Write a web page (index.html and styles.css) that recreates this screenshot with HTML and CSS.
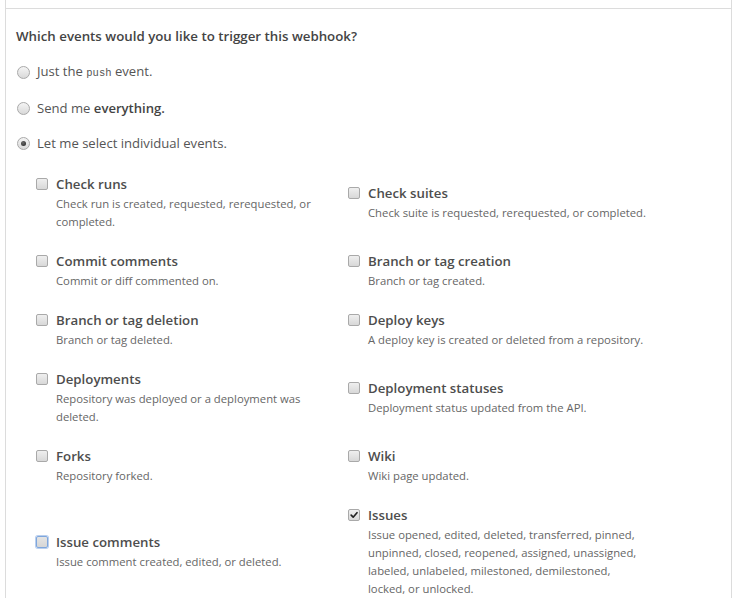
FILE: index.html
```html
<!DOCTYPE html>
<html lang="en">
<head>
<meta charset="utf-8">
<title>Webhook events</title>
<link rel="stylesheet" href="styles.css">
</head>
<body>
<div class="panel">
  <div class="panel-top"></div>
  <div class="panel-body">
    <h5 class="question">Which events would you like to trigger this webhook?</h5>
    <div class="radios">
      <label class="radio-row"><span class="radio"></span><span>Just the <code class="mono">push</code> event.</span></label>
      <label class="radio-row"><span class="radio"></span><span>Send me <strong>everything.</strong></span></label>
      <label class="radio-row"><span class="radio selected"></span><span>Let me select individual events.</span></label>
    </div>
    <div class="events">
      <div class="event"><span class="cb"></span><div class="event-text"><div class="event-title">Check runs</div><p class="event-desc">Check run is created, requested, rerequested, or completed.</p></div></div>
      <div class="event"><span class="cb"></span><div class="event-text"><div class="event-title">Check suites</div><p class="event-desc">Check suite is requested, rerequested, or completed.</p></div></div>
      <div class="event"><span class="cb"></span><div class="event-text"><div class="event-title">Commit comments</div><p class="event-desc">Commit or diff commented on.</p></div></div>
      <div class="event"><span class="cb"></span><div class="event-text"><div class="event-title">Branch or tag creation</div><p class="event-desc">Branch or tag created.</p></div></div>
      <div class="event"><span class="cb"></span><div class="event-text"><div class="event-title">Branch or tag deletion</div><p class="event-desc">Branch or tag deleted.</p></div></div>
      <div class="event"><span class="cb"></span><div class="event-text"><div class="event-title">Deploy keys</div><p class="event-desc">A deploy key is created or deleted from a repository.</p></div></div>
      <div class="event"><span class="cb"></span><div class="event-text"><div class="event-title">Deployments</div><p class="event-desc">Repository was deployed or a deployment was deleted.</p></div></div>
      <div class="event"><span class="cb"></span><div class="event-text"><div class="event-title">Deployment statuses</div><p class="event-desc">Deployment status updated from the API.</p></div></div>
      <div class="event"><span class="cb"></span><div class="event-text"><div class="event-title">Forks</div><p class="event-desc">Repository forked.</p></div></div>
      <div class="event"><span class="cb"></span><div class="event-text"><div class="event-title">Wiki</div><p class="event-desc">Wiki page updated.</p></div></div>
      <div class="event"><span class="cb focused"></span><div class="event-text"><div class="event-title">Issue comments</div><p class="event-desc">Issue comment created, edited, or deleted.</p></div></div>
      <div class="event"><span class="cb checked"><svg viewBox="0 0 12 12" width="12" height="12"><path d="M2.6 6.2 L5 8.6 L9.6 3.2" fill="none" stroke="#222" stroke-width="2" stroke-linecap="round" stroke-linejoin="round"/></svg></span><div class="event-text"><div class="event-title">Issues</div><p class="event-desc">Issue opened, edited, deleted, transferred, pinned, unpinned, closed, reopened, assigned, unassigned, labeled, unlabeled, milestoned, demilestoned, locked, or unlocked.</p></div></div>
    </div>
  </div>
</div>
</body>
</html>
```

FILE: styles.css
```css
html, body {
  margin: 0;
  padding: 0;
  background: #fff;
  overflow: hidden;
}

body {
  font-family: "Open Sans", "Noto Sans", sans-serif;
  color: #444;
}

.panel {
  margin-left: 5px;
  width: 725px;
  border-left: 1px solid #dcdcdc;
  border-right: 1px solid #dcdcdc;
}

.panel-top {
  height: 8px;
}

.panel-body {
  border-top: 1px solid #dcdcdc;
  padding: 17px 10px 40px 10px;
}

.question {
  margin: 0;
  font-size: 13.3px;
  font-weight: 550;
  line-height: 20px;
  color: #444;
}

.radios {
  margin-top: 15px;
  display: flex;
  flex-direction: column;
  gap: 15px;
}

.radio-row {
  display: flex;
  align-items: center;
  gap: 7px;
  font-size: 13.1px;
  line-height: 20px;
  color: #555;
}

.radio-row strong {
  font-weight: 550;
  color: #444;
}

.mono {
  font-family: "Liberation Mono", "DejaVu Sans Mono", monospace;
  font-size: 10.5px;
  color: #555;
}

.radio {
  margin-left: 1px;
  width: 11px;
  height: 11px;
  border-radius: 50%;
  border: 1px solid #a9a9a9;
  background: linear-gradient(#f4f4f4, #d9d9d9);
  display: flex;
  align-items: center;
  justify-content: center;
  flex: none;
}

.radio.selected::after {
  content: "";
  width: 5px;
  height: 5px;
  border-radius: 50%;
  background: radial-gradient(circle at 40% 35%, #6a6a6a, #222);
}

.events {
  margin: 21px 0 0 20px;
  display: grid;
  grid-template-columns: 312px 1fr;
  row-gap: 20px;
  align-items: center;
}

.event {
  display: flex;
  align-items: flex-start;
  gap: 8px;
}

.cb {
  flex: none;
  margin-top: 4px;
  width: 10px;
  height: 10px;
  border: 1px solid #a9a9a9;
  border-radius: 2px;
  background: linear-gradient(#efefef, #d8d8d8);
  display: flex;
  align-items: center;
  justify-content: center;
}

.cb svg {
  width: 10px;
  height: 10px;
}

.cb.focused {
  border-color: #7ea6dd;
  box-shadow: 0 0 0 1px #b9cfee;
  background: linear-gradient(#e4e4e4, #d6d6d6);
}

.event-text {
  width: 281px;
}

.event-title {
  font-size: 13.25px;
  font-weight: 550;
  line-height: 20px;
  color: #4d4d4d;
}

.event-desc {
  margin: 1px 0 0 0;
  font-size: 11.3px;
  line-height: 18px;
  color: #666;
}
```
